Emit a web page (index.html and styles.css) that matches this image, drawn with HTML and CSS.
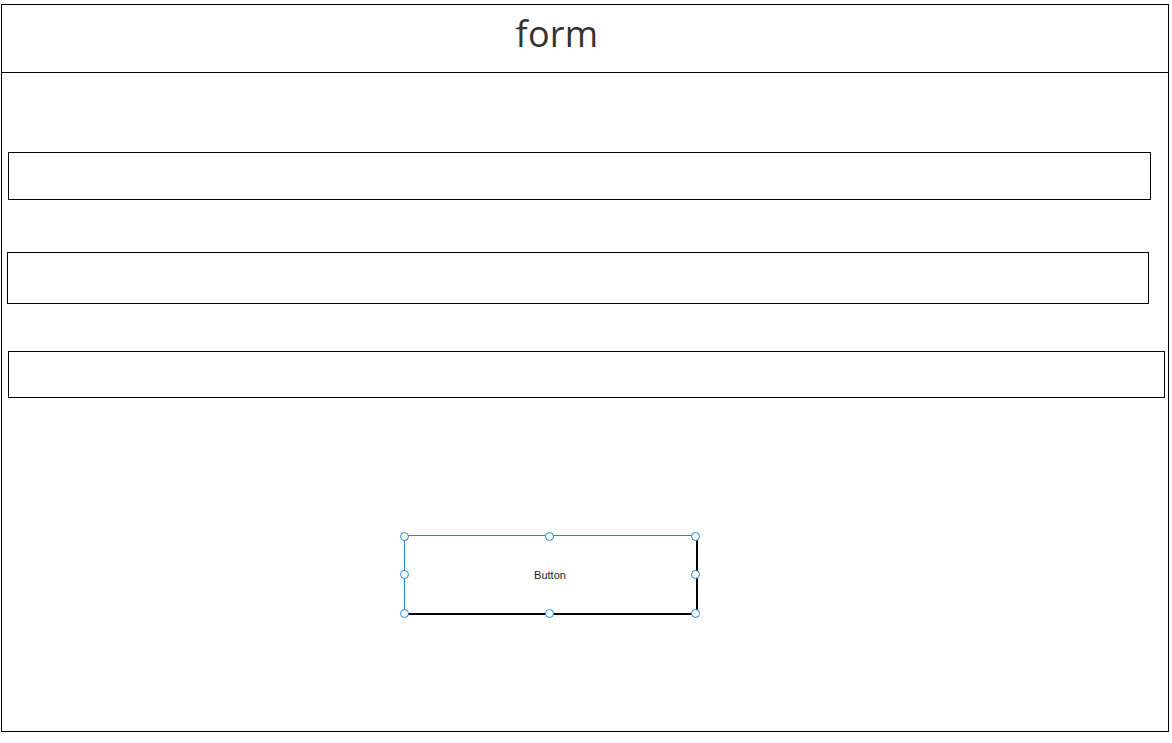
FILE: index.html
```html
<!DOCTYPE html>
<html>
<head>
<meta charset="utf-8">
<link rel="stylesheet" href="styles.css">
</head>
<body>
<div class="frame">
  <div class="header">form</div>
  <div class="content">
    <div class="field f1"></div>
    <div class="field f2"></div>
    <div class="field f3"></div>
    <div class="btn">
      <span class="btn-label">Button</span>
      <div class="sel">
        <span class="h tl"></span><span class="h tc"></span><span class="h tr"></span>
        <span class="h ml"></span><span class="h mr"></span>
        <span class="h bl"></span><span class="h bc"></span><span class="h br"></span>
      </div>
    </div>
  </div>
</div>
</body>
</html>
```
FILE: styles.css
```css
html, body {
  margin: 0;
  padding: 0;
  background: #fff;
}
body {
  font-family: "Open Sans", "Noto Sans", sans-serif;
}
.frame {
  box-sizing: border-box;
  margin: 4px 0 0 1px;
  width: 1168px;
  height: 728px;
  border: 1px solid #000;
  display: flex;
  flex-direction: column;
}
.header {
  box-sizing: border-box;
  height: 68px;
  border-bottom: 1px solid #000;
  display: flex;
  justify-content: center;
  align-items: center;
  padding-right: 56px;
  padding-bottom: 10px;
  font-size: 36px;
  color: #333;
  font-weight: 400;
  letter-spacing: 0.3px;
}
.content {
  display: flex;
  flex-direction: column;
  align-items: flex-start;
}
.field {
  box-sizing: border-box;
  border: 1px solid #000;
}
.f1 {
  margin: 79px 0 0 6px;
  width: 1143px;
  height: 48px;
}
.f2 {
  margin: 52px 0 0 5px;
  width: 1142px;
  height: 52px;
}
.f3 {
  margin: 47px 0 0 6px;
  width: 1157px;
  height: 47px;
}
.btn {
  position: relative;
  box-sizing: border-box;
  margin: 137px 0 0 402px;
  width: 294px;
  height: 80px;
  border-right: 2px solid #000;
  border-bottom: 2px solid #000;
  display: flex;
  justify-content: center;
  align-items: center;
  padding-top: 2px;
  font-family: "Liberation Sans", Arial, sans-serif;
  font-size: 11px;
  color: #222;
}
.sel {
  position: absolute;
  left: 0;
  top: 0;
  width: 292px;
  height: 78px;
  box-sizing: border-box;
  border: 1px solid #1e88e5;
  border-right: none;
  border-bottom: none;
}
.h {
  position: absolute;
  box-sizing: border-box;
  width: 9px;
  height: 9px;
  border: 1px solid #1e88e5;
  border-radius: 50%;
  background: #fff;
}
.tl { left: -5px; top: -4px; }
.tc { left: 140px; top: -4px; }
.tr { left: 286px; top: -4px; }
.ml { left: -5px; top: 34px; }
.mr { left: 286px; top: 34px; }
.bl { left: -5px; top: 73px; }
.bc { left: 140px; top: 73px; }
.br { left: 286px; top: 73px; }
```
